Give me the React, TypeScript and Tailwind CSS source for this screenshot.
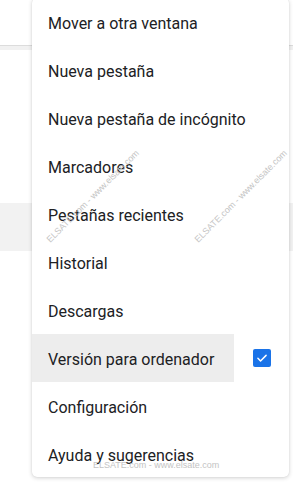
import React from 'react';

const items = [
  'Mover a otra ventana',
  'Nueva pestaña',
  'Nueva pestaña de incógnito',
  'Marcadores',
  'Pestañas recientes',
  'Historial',
  'Descargas',
  'Versión para ordenador',
  'Configuración',
  'Ayuda y sugerencias',
];

function Watermark({ className }: { className: string }) {
  return (
    <div
      className={`absolute whitespace-nowrap leading-none text-[#c4c4c4] font-['Liberation_Sans',sans-serif] ${className}`}
    >
      ELSATE.com - www.elsate.com
    </div>
  );
}

export default function App() {
  return (
    <div className="relative w-[293px] h-[487px] overflow-hidden bg-white font-['Roboto',sans-serif]">
      {/* page behind the menu */}
      <div className="flex flex-col">
        <div className="h-[46px] bg-white border-b border-[#dcdcdc]" />
        <div className="h-[4px] bg-[#f1f1f1]" />
        <div className="h-[153px] bg-white" />
        <div className="h-[48px] bg-[#f2f2f2]" />
      </div>

      {/* overflow menu */}
      <div className="absolute left-[32px] top-[-2px] w-[257px] h-[479px] rounded-[5px] bg-white shadow-[0_1px_4px_rgba(0,0,0,0.18),0_0_1px_rgba(0,0,0,0.12)] overflow-hidden">
        {items.map((label, i) => {
          const active = i === 7;
          return (
            <div key={label} className="flex h-[48px] items-center">
              <div
                className={`flex h-full w-[202px] shrink-0 items-center pl-[16px] pt-[3px] text-[16px] text-[#202124] whitespace-nowrap ${
                  active ? 'bg-[#ededed]' : ''
                }`}
              >
                {label}
              </div>
              {active && (
                <div className="ml-[19px] flex h-[18px] w-[18px] items-center justify-center rounded-[2px] bg-[#1a73e8]">
                  <svg width="14" height="14" viewBox="0 0 24 24" fill="none">
                    <path d="M5 12.5l4.5 4.5L19 7.5" stroke="white" strokeWidth="2.6" strokeLinecap="round" strokeLinejoin="round" />
                  </svg>
                </div>
              )}
            </div>
          );
        })}
      </div>

      {/* watermarks */}
      <Watermark className="left-[30px] top-[192px] text-[9px] -rotate-45 origin-center" />
      <Watermark className="left-[178px] top-[192px] text-[9px] -rotate-45 origin-center" />
      <Watermark className="left-[93px] top-[461px] text-[9px] text-[#b8b8b8]" />
    </div>
  );
}
